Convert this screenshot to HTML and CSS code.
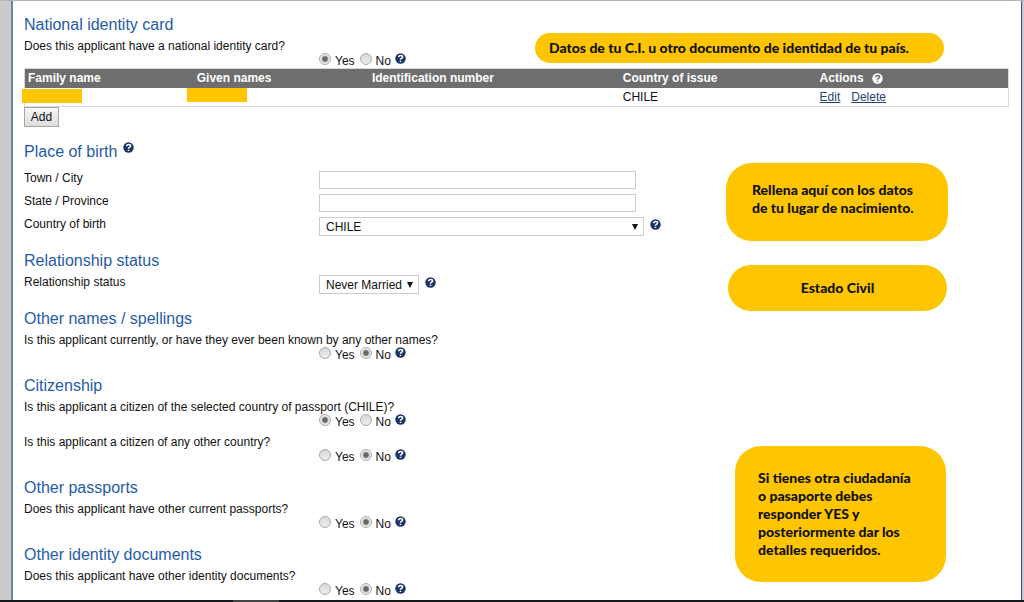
FILE: index.html
```html
<!DOCTYPE html>
<html lang="en">
<head>
<meta charset="utf-8">
<title>Applicant details</title>
<link rel="stylesheet" href="styles.css">
</head>
<body>
<svg class="sprite" aria-hidden="true">
  <symbol id="help" viewBox="0 0 11 11">
    <circle cx="5.5" cy="5.5" r="5.2" fill="currentColor"/>
    <path class="mark" d="M3.6 4.3C3.7 2.9 4.5 2.4 5.6 2.4C6.8 2.4 7.6 3 7.6 4C7.6 5.2 5.6 5.2 5.5 6.7M5.5 7.7V9"/>
  </symbol>
</svg>
<main class="page">
  <form class="form">
    <section class="section">
      <h2>National identity card</h2>
      <fieldset class="question">
        <legend>Does this applicant have a national identity card?</legend>
        <div class="choices">
          <label><input type="radio" name="card" checked><span>Yes</span></label>
          <label><input type="radio" name="card"><span>No</span></label>
          <svg class="help"><use href="#help"/></svg>
        </div>
      </fieldset>
      <table class="cards">
        <thead>
          <tr>
            <th class="family">Family name</th>
            <th class="given">Given names</th>
            <th class="number">Identification number</th>
            <th class="country">Country of issue</th>
            <th>Actions <svg class="help light"><use href="#help"/></svg></th>
          </tr>
        </thead>
        <tbody>
          <tr><td></td><td></td><td></td><td>CHILE</td><td><a href="#">Edit</a><a href="#">Delete</a></td></tr>
        </tbody>
      </table>
      <button class="add" type="button">Add</button>
    </section>

    <section class="section">
      <h2>Place of birth <svg class="help raised"><use href="#help"/></svg></h2>
      <div class="fields">
        <div class="field"><label for="town">Town / City</label><input class="text" id="town" type="text"></div>
        <div class="field"><label for="state">State / Province</label><input class="text" id="state" type="text"></div>
        <div class="field">
          <label for="birth">Country of birth</label>
          <span class="select wide"><select id="birth"><option>CHILE</option></select></span>
          <svg class="help"><use href="#help"/></svg>
        </div>
      </div>
    </section>

    <section class="section">
      <h2>Relationship status</h2>
      <div class="field">
        <label for="status">Relationship status</label>
        <span class="select"><select id="status"><option>Never Married</option></select></span>
        <svg class="help"><use href="#help"/></svg>
      </div>
    </section>

    <section class="section">
      <h2>Other names / spellings</h2>
      <fieldset class="question">
        <legend>Is this applicant currently, or have they ever been known by any other names?</legend>
        <div class="choices">
          <label><input type="radio" name="names"><span>Yes</span></label>
          <label><input type="radio" name="names" checked><span>No</span></label>
          <svg class="help"><use href="#help"/></svg>
        </div>
      </fieldset>
    </section>

    <section class="section">
      <h2>Citizenship</h2>
      <fieldset class="question">
        <legend>Is this applicant a citizen of the selected country of passport (CHILE)?</legend>
        <div class="choices">
          <label><input type="radio" name="citizen" checked><span>Yes</span></label>
          <label><input type="radio" name="citizen"><span>No</span></label>
          <svg class="help"><use href="#help"/></svg>
        </div>
      </fieldset>
      <fieldset class="question">
        <legend>Is this applicant a citizen of any other country?</legend>
        <div class="choices">
          <label><input type="radio" name="other"><span>Yes</span></label>
          <label><input type="radio" name="other" checked><span>No</span></label>
          <svg class="help"><use href="#help"/></svg>
        </div>
      </fieldset>
    </section>

    <section class="section">
      <h2>Other passports</h2>
      <fieldset class="question">
        <legend>Does this applicant have other current passports?</legend>
        <div class="choices">
          <label><input type="radio" name="passports"><span>Yes</span></label>
          <label><input type="radio" name="passports" checked><span>No</span></label>
          <svg class="help"><use href="#help"/></svg>
        </div>
      </fieldset>
    </section>

    <section class="section">
      <h2>Other identity documents</h2>
      <fieldset class="question">
        <legend>Does this applicant have other identity documents?</legend>
        <div class="choices">
          <label><input type="radio" name="documents"><span>Yes</span></label>
          <label><input type="radio" name="documents" checked><span>No</span></label>
          <svg class="help"><use href="#help"/></svg>
        </div>
      </fieldset>
    </section>
  </form>
</main>
<footer class="bar"><div class="thumb"></div></footer>

<span class="cover cover-family"></span>
<span class="cover cover-given"></span>
<aside class="note note-card">Datos de tu C.I. u otro documento de identidad de tu país.</aside>
<aside class="note note-birth">Rellena aquí con los datos<br>de tu lugar de nacimiento.</aside>
<aside class="note note-status">Estado Civil</aside>
<aside class="note note-citizen">Si tienes otra ciudadanía<br>o pasaporte debes<br>responder YES y<br>posteriormente dar los<br>detalles requeridos.</aside>
</body>
</html>
```
FILE: styles.css
```css
* { box-sizing: border-box; }

body {
  position: relative;
  display: flex;
  flex-direction: column;
  min-height: 100vh;
  margin: 0;
  padding: 0 2px 0 11px;
  border-top: 1px solid #b4b4b4;
  background: #cbcbcb;
  color: #111;
  font: 12px/14px "Liberation Sans", Arial, sans-serif;
}

.sprite { position: absolute; width: 0; height: 0; }

.page {
  flex: 1;
  padding: 14px 12px 2px 11px;
  border-left: 2px solid #6f83a6;
  border-right: 1px solid #3b5078;
  background: #fff;
}

.form { display: flex; flex-direction: column; gap: 15px; }

h2 {
  display: flex;
  gap: 6px;
  margin: 0 0 4px;
  color: #1f5ca8;
  font-size: 16px;
  font-weight: 400;
  line-height: 20px;
}

.question { margin: 0; padding: 0; border: 0; }
.question + .question { margin-top: 7px; }
legend { padding: 0; white-space: nowrap; }

.choices {
  display: flex;
  gap: 5px;
  height: 14px;
  padding-left: 295px;
}
.choices label { display: flex; gap: 4px; }
.choices span { padding-top: 1px; }

input[type="radio"] {
  appearance: none;
  width: 12px;
  height: 12px;
  margin: 0;
  border: 1px solid #aaa;
  border-radius: 50%;
  background: linear-gradient(#d8d8d8, #ececec);
}
input[type="radio"]:checked {
  background: radial-gradient(circle, #666 0 2px, #eee 4px);
}

.help {
  --mark: #fff;
  flex: none;
  width: 11px;
  height: 11px;
  color: #1c3566;
}
.mark { fill: none; stroke: var(--mark); stroke-width: 1.5; }
.choices .help { margin-left: -1px; }
.light { --mark: #6e6e6e; margin-left: 5px; color: #fff; vertical-align: -2px; }

.cards {
  width: 100%;
  margin-top: 1px;
  border: 1px solid #d9d9d9;
  border-collapse: collapse;
  table-layout: fixed;
}
.cards thead { background: #6e6e6e; color: #fff; }
.cards th, .cards td { height: 19px; padding: 0 3px; text-align: left; }
.family { width: 17.2%; }
.given { width: 17.8%; }
.number { width: 25.5%; }
.country { width: 20%; }
a { margin-right: 11px; color: #2a4270; }

.add {
  display: block;
  width: 35px;
  height: 20px;
  padding: 0;
  border: 1px solid #a6a6a6;
  background: linear-gradient(#f6f6f6, #dedede);
  color: #111;
  font: inherit;
}

.fields { display: flex; flex-direction: column; gap: 5px; padding-top: 5px; }
.field { display: flex; align-items: flex-start; }
.field label { flex: none; width: 295px; }
.field .help { margin-left: 6px; margin-top: 2px; }
.text {
  width: 317px;
  height: 18px;
  border: 1px solid #ccc;
  background: #fff;
  font: inherit;
}
.select { position: relative; }
.select select {
  display: block;
  appearance: none;
  height: 19px;
  width: 100%;
  padding: 0 15px 0 6px;
  border: 1px solid #ccc;
  border-radius: 0;
  background: #fff;
  color: #111;
  font: inherit;
}
.select::after {
  content: "";
  position: absolute;
  right: 6px;
  top: 7px;
  border: 3px solid transparent;
  border-top: 6px solid #111;
  border-bottom: 0;
}
.wide { width: 325px; }

.bar { height: 2px; margin: 0 -2px 0 -11px; padding-left: 23%; background: #14171c; }
.thumb { width: 46px; height: 2px; background: #444; }

/* Annotations laid over the form */
.cover { position: absolute; width: 60px; height: 14px; background: #ffc600; }
.cover-family { left: 22px; top: 88px; }
.cover-given { left: 187px; top: 87px; }
.note {
  position: absolute;
  border-radius: 26px;
  background: #ffc600;
  color: #111;
  font: 900 14px/18px Lato, sans-serif;
  white-space: nowrap;
}
.note-card { left: 535px; top: 32px; width: 409px; padding: 6px 14px; }
.note-birth { left: 726px; top: 162px; width: 222px; padding: 18px 26px 24px; }
.note-status { left: 728px; top: 264px; width: 219px; padding: 14px; text-align: center; }
.note-citizen { left: 735px; top: 445px; width: 211px; padding: 23px; }
```
